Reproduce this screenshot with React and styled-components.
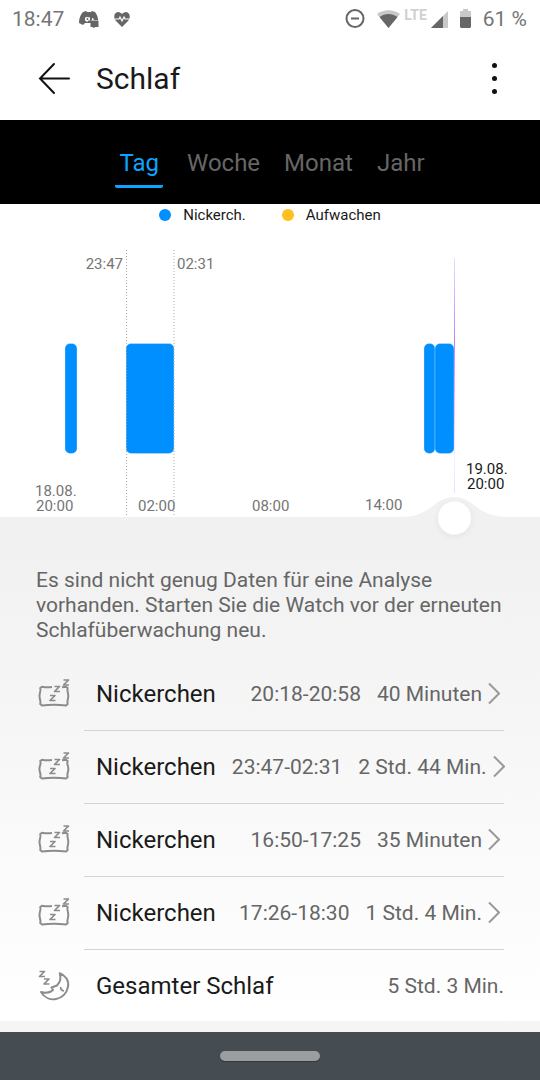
import React, { useState } from 'react';
import styled, { createGlobalStyle } from 'styled-components';

const GlobalStyle = createGlobalStyle`
  body {
    margin: 0;
    background-color: #fff;
    font-family: Roboto, "Noto Sans", sans-serif;
    color: #1a1a1a;
  }

  * {
    box-sizing: border-box;
  }
`;

const Screen = styled.div`
  display: flex;
  flex-direction: column;
  min-height: 100vh;
`;

const StatusBar = styled.div`
  display: flex;
  align-items: center;
  justify-content: space-between;
  height: 38px;
  padding: 0 13px 0 12px;
  font-size: 21px;
  line-height: 24px;
  color: #757575;
`;

const StatusGroup = styled.div`
  display: flex;
  align-items: center;
  gap: ${(props) => props.$gap};
`;

const Signal = styled.span`
  display: flex;
  align-items: center;
  gap: 4px;
`;

const Network = styled.span`
  align-self: flex-start;
  font-size: 14px;
  line-height: 10px;
  font-weight: 700;
  color: #d0d0d0;
`;

const Header = styled.header`
  display: flex;
  align-items: center;
  gap: 24px;
  height: 82px;
  padding: 0 36px;
`;

const Title = styled.h1`
  flex: 1;
  margin: 0;
  font-size: 30px;
  line-height: 36px;
  font-weight: 400;
`;

const IconButton = styled.button`
  display: flex;
  padding: 0;
  border: none;
  background: none;
  color: #111;
  cursor: pointer;
`;

const TabBar = styled.nav`
  display: flex;
  justify-content: center;
  gap: 16px;
  height: 84px;
  padding: 24px 0 0 4px;
  background-color: #000;
`;

const Tab = styled.button`
  height: 44px;
  margin-right: ${(props) => (props.$active ? '4px' : '0')};
  padding: 0 4px 4px;
  border: none;
  border-bottom: 3px solid ${(props) => (props.$active ? '#0ba5ff' : 'transparent')};
  border-radius: 2px;
  background: none;
  font-family: inherit;
  font-size: 24px;
  line-height: 28px;
  color: ${(props) => (props.$active ? '#0ba5ff' : '#666')};
  cursor: pointer;
`;

const Legend = styled.div`
  display: flex;
  justify-content: center;
  gap: 36px;
  height: 22px;
  margin-bottom: 2px;
  font-size: 15px;
  line-height: 22px;
`;

const LegendItem = styled.span`
  display: flex;
  align-items: center;
  gap: 12px;
`;

const Dot = styled.span`
  width: 12px;
  height: 12px;
  border-radius: 50%;
  background-color: ${(props) => props.$color};
`;

const Chart = styled.svg`
  display: block;
  width: 100%;
  font-size: 15px;
`;

const Content = styled.main`
  flex: 1;
  padding: 18px 36px 0;
  background: linear-gradient(#f1f1f1, #fff);
`;

const Notice = styled.p`
  margin: 0 0 15px;
  font-size: 21px;
  line-height: 25px;
  color: #666;
`;

const List = styled.ul`
  margin: 0;
  padding: 0;
  list-style: none;
`;

const Row = styled.li`
  display: flex;
  align-items: center;
  gap: 12px;

  > svg {
    flex-shrink: 0;
  }
`;

const RowBody = styled.div`
  flex: 1;
  display: flex;
  align-items: center;
  min-width: 0;
  height: ${(props) => (props.$last ? '71px' : '73px')};
  padding-left: 12px;
  border-bottom: ${(props) => (props.$last ? 'none' : '1px solid #d4d4d4')};
  white-space: nowrap;
`;

const RowTitle = styled.span`
  flex: 1 0 auto;
  font-size: 24px;
  line-height: 28px;
`;

const RowValue = styled.span`
  flex-shrink: 0;
  margin-left: 16px;
  font-size: 21px;
  line-height: 24px;
  color: #666;
`;

const RowLink = styled(IconButton)`
  flex-shrink: 0;
  margin: 0 4px 0 6px;
  color: #999;
`;

const Footer = styled.div`
  height: 11px;
  background-color: #f5f5f5;
`;

const NavBar = styled.div`
  display: flex;
  align-items: center;
  justify-content: center;
  height: 48px;
  background-color: #464d52;
`;

const HomeButton = styled.button`
  width: 100px;
  height: 10px;
  padding: 0;
  border: none;
  border-radius: 5px;
  background-color: #9b9e9e;
  box-shadow: 0 1px 1px #34393d;
`;

const DiscordIcon = () => (
  <svg width="20" height="18" viewBox="0 0 20 18" fill="#666">
    <path d="M4 2 7 1l1 1h4l1-1 3 1c2 3 3 5 3 8h-7v3H6l-2 2-4-2C0 9 1 5 4 2Z" />
    <path d="M6 7.500c1.500-.7 3.500-.7 5 0v3H9.500L8 12l-2-1.500Z" fill="#fff" />
    <circle cx="8.500" cy="9" r="1" />
    <path d="M13 8c1.200-.3 2 .8 1.700 2H13Z" fill="#fff" />
    <path d="M11.500 10.500h8V17h-3l-2 1-1-1h-2z" />
  </svg>
);

const HeartIcon = () => (
  <svg width="16" height="15" viewBox="0 0 16 15" fill="#666">
    <path d="M8 15 2 9C-1 6 0 0 4 0c2 0 3 1 4 2 1-1 2-2 4-2 4 0 5 6 2 9Z" />
    <path d="M1 7h4l1-2 2 4 2-4 1 2h4" fill="none" stroke="#fff" strokeWidth="1.200" />
  </svg>
);

const DndIcon = () => (
  <svg width="20" height="20" viewBox="0 0 20 20" fill="none" stroke="#666" strokeWidth="2">
    <circle cx="10" cy="9.500" r="8.500" />
    <path d="M6 9.500h8" />
  </svg>
);

const WifiIcon = () => (
  <svg width="23" height="19" viewBox="0 0 23 19">
    <path d="M0 4C7-1 16-1 23 4L11.500 18Z" fill="#c8c8c8" />
    <path d="M2.500 7C8 3 15 3 20.500 7l-9 11Z" fill="#666" />
  </svg>
);

const SignalIcon = () => (
  <svg width="17" height="19" viewBox="0 0 17 19">
    <path d="M17 1v17H0Z" fill="#c8c8c8" />
    <path d="M12 6v12H0Z" fill="#666" />
  </svg>
);

const BatteryIcon = () => (
  <svg width="11" height="20" viewBox="0 0 11 20">
    <path d="M3 0h5v2h3v6H0V2h3Z" fill="#c8c8c8" />
    <path d="M0 8h11v10l-1 1H1l-1-1Z" fill="#666" />
  </svg>
);

const BackIcon = () => (
  <svg width="36" height="36" viewBox="0 0 36 36" fill="none" stroke="currentColor" strokeWidth="2" strokeLinecap="round">
    <path d="M18 3 4 17.500 18 32M4 17.500h29" />
  </svg>
);

const MoreIcon = () => (
  <svg width="18" height="36" viewBox="0 0 18 36" fill="currentColor">
    <circle cx="8.500" cy="4.500" r="2.500" />
    <circle cx="8.500" cy="17.500" r="2.500" />
    <circle cx="8.500" cy="30.500" r="2.500" />
  </svg>
);

const ChevronIcon = () => (
  <svg width="12" height="24" viewBox="0 0 12 24" fill="none" stroke="currentColor" strokeWidth="2">
    <path d="m1 1.500 10 10-10 10" />
  </svg>
);

const PillowIcon = () => (
  <svg width="36" height="36" viewBox="0 0 36 36" fill="none" stroke="#8c8c8c" strokeWidth="2" strokeLinejoin="round">
    <path d="M16 10c-4 .5-7 .4-10-.3L4.200 11c.8 2 .5 3-.3 5-.6 2-.6 4 0 6s1 3 .3 5L6 28.500c7-1 17-1 24 0l1.700-1.500c-.7-2-.4-3 .2-5s.6-4 0-6c-.8-2-1-3-.2-5L30 9.700l-4 .5" />
    <path d="M14 18.500h5l-5 5h5.500M18.500 9.500h5l-5 5H24M27.500 3h5l-5 5H33" strokeWidth="1.700" />
  </svg>
);

const MoonIcon = () => (
  <svg width="36" height="36" viewBox="0 0 36 36" fill="none" stroke="#8c8c8c" strokeWidth="2" strokeLinejoin="round">
    <path d="M23.700 5.300c6 2 9.500 7.500 8.300 13.500C29.500 32.500 12 36 5 24c3.500 1 7 1 10-.5l2-1.500-1.500-2.500 5.500-2c3.500-3.500 4.200-7.500 2.700-12.200Z" />
    <path d="M24.700 19c-.2 2 1 3.500 3.300 4M3.500 3.500h5l-5 5H9M8 11h5l-5 5h5.500" strokeWidth="1.700" />
  </svg>
);

const tabs = ['Tag', 'Woche', 'Monat', 'Jahr'];

const naps = [
  { range: '20:18-20:58', duration: '40 Minuten' },
  { range: '23:47-02:31', duration: '2 Std. 44 Min.' },
  { range: '16:50-17:25', duration: '35 Minuten' },
  { range: '17:26-18:30', duration: '1 Std. 4 Min.' },
];

const bars = [
  { x: 65, width: 12 },
  { x: 126, width: 48 },
  { x: 424, width: 11 },
  { x: 435, width: 19 },
];

function SleepChart() {
  return (
    <Chart viewBox="0 0 540 322" role="img" aria-label="Schlaf">
      <defs>
        <linearGradient id="cursor" x1="0" y1="0" x2="0" y2="1">
          <stop offset="0" stopColor="#e9dcff" />
          <stop offset="0.350" stopColor="#b883ff" />
          <stop offset="0.600" stopColor="#ffb0f4" />
          <stop offset="0.850" stopColor="#f8f0ff" />
          <stop offset="1" stopColor="#e4e0ff" />
        </linearGradient>
        <filter id="knob" x="-50%" y="-50%" width="200%" height="200%">
          <feDropShadow dx="0" dy="2" stdDeviation="3" floodOpacity="0.060" />
        </filter>
      </defs>
      <path d="M0 289h400c32 0 34-20 54-20s22 20 54 20h32v33H0Z" fill="#f1f1f1" />
      {bars.map((bar) => (
        <rect
          key={bar.x}
          x={bar.x}
          y="115.500"
          width={bar.width}
          height="110"
          rx="5"
          fill="#008fff"
          stroke="#fff"
          strokeOpacity="0.500"
          strokeWidth="0.500"
        />
      ))}
      <path d="M126.500 22v267M174 22v267" stroke="#aaa" strokeDasharray="1 2" />
      <rect x="454" y="30" width="1" height="235" fill="url(#cursor)" />
      <circle cx="454.500" cy="290" r="16.500" fill="#fff" filter="url(#knob)" />
      <g fill="#757575">
        <text x="123" y="41" textAnchor="end">23:47</text>
        <text x="177" y="41">02:31</text>
        <text x="35" y="268">18.08.</text>
        <text x="36" y="283">20:00</text>
        <text x="138" y="283">02:00</text>
        <text x="252" y="283">08:00</text>
        <text x="365" y="282">14:00</text>
      </g>
      <g fill="#1a1a1a">
        <text x="466" y="246">19.08.</text>
        <text x="467" y="261">20:00</text>
      </g>
    </Chart>
  );
}

function App() {
  const [activeTab, setActiveTab] = useState('Tag');

  return (
    <Screen>
      <GlobalStyle />
      <StatusBar>
        <StatusGroup $gap="15px">
          <span>18:47</span>
          <DiscordIcon />
          <HeartIcon />
        </StatusGroup>
        <StatusGroup $gap="12px">
          <DndIcon />
          <Signal>
            <WifiIcon />
            <Network>LTE</Network>
            <SignalIcon />
          </Signal>
          <BatteryIcon />
          <span>61 %</span>
        </StatusGroup>
      </StatusBar>

      <Header>
        <IconButton aria-label="Zurück"><BackIcon /></IconButton>
        <Title>Schlaf</Title>
        <IconButton aria-label="Mehr"><MoreIcon /></IconButton>
      </Header>

      <TabBar>
        {tabs.map((tab) => (
          <Tab key={tab} $active={tab === activeTab} onClick={() => setActiveTab(tab)}>
            {tab}
          </Tab>
        ))}
      </TabBar>

      <Legend>
        <LegendItem><Dot $color="#008fff" />Nickerch.</LegendItem>
        <LegendItem><Dot $color="#ffbf1f" />Aufwachen</LegendItem>
      </Legend>
      <SleepChart />

      <Content>
        <Notice>
          Es sind nicht genug Daten für eine Analyse vorhanden. Starten Sie die Watch vor der erneuten Schlafüberwachung neu.
        </Notice>
        <List>
          {naps.map((nap) => (
            <Row key={nap.range}>
              <PillowIcon />
              <RowBody>
                <RowTitle>Nickerchen</RowTitle>
                <RowValue>{nap.range}</RowValue>
                <RowValue>{nap.duration}</RowValue>
                <RowLink aria-label="Details"><ChevronIcon /></RowLink>
              </RowBody>
            </Row>
          ))}
          <Row>
            <MoonIcon />
            <RowBody $last>
              <RowTitle>Gesamter Schlaf</RowTitle>
              <RowValue>5 Std. 3 Min.</RowValue>
            </RowBody>
          </Row>
        </List>
      </Content>
      <Footer />

      <NavBar>
        <HomeButton aria-label="Startseite" />
      </NavBar>
    </Screen>
  );
}

export default App;
